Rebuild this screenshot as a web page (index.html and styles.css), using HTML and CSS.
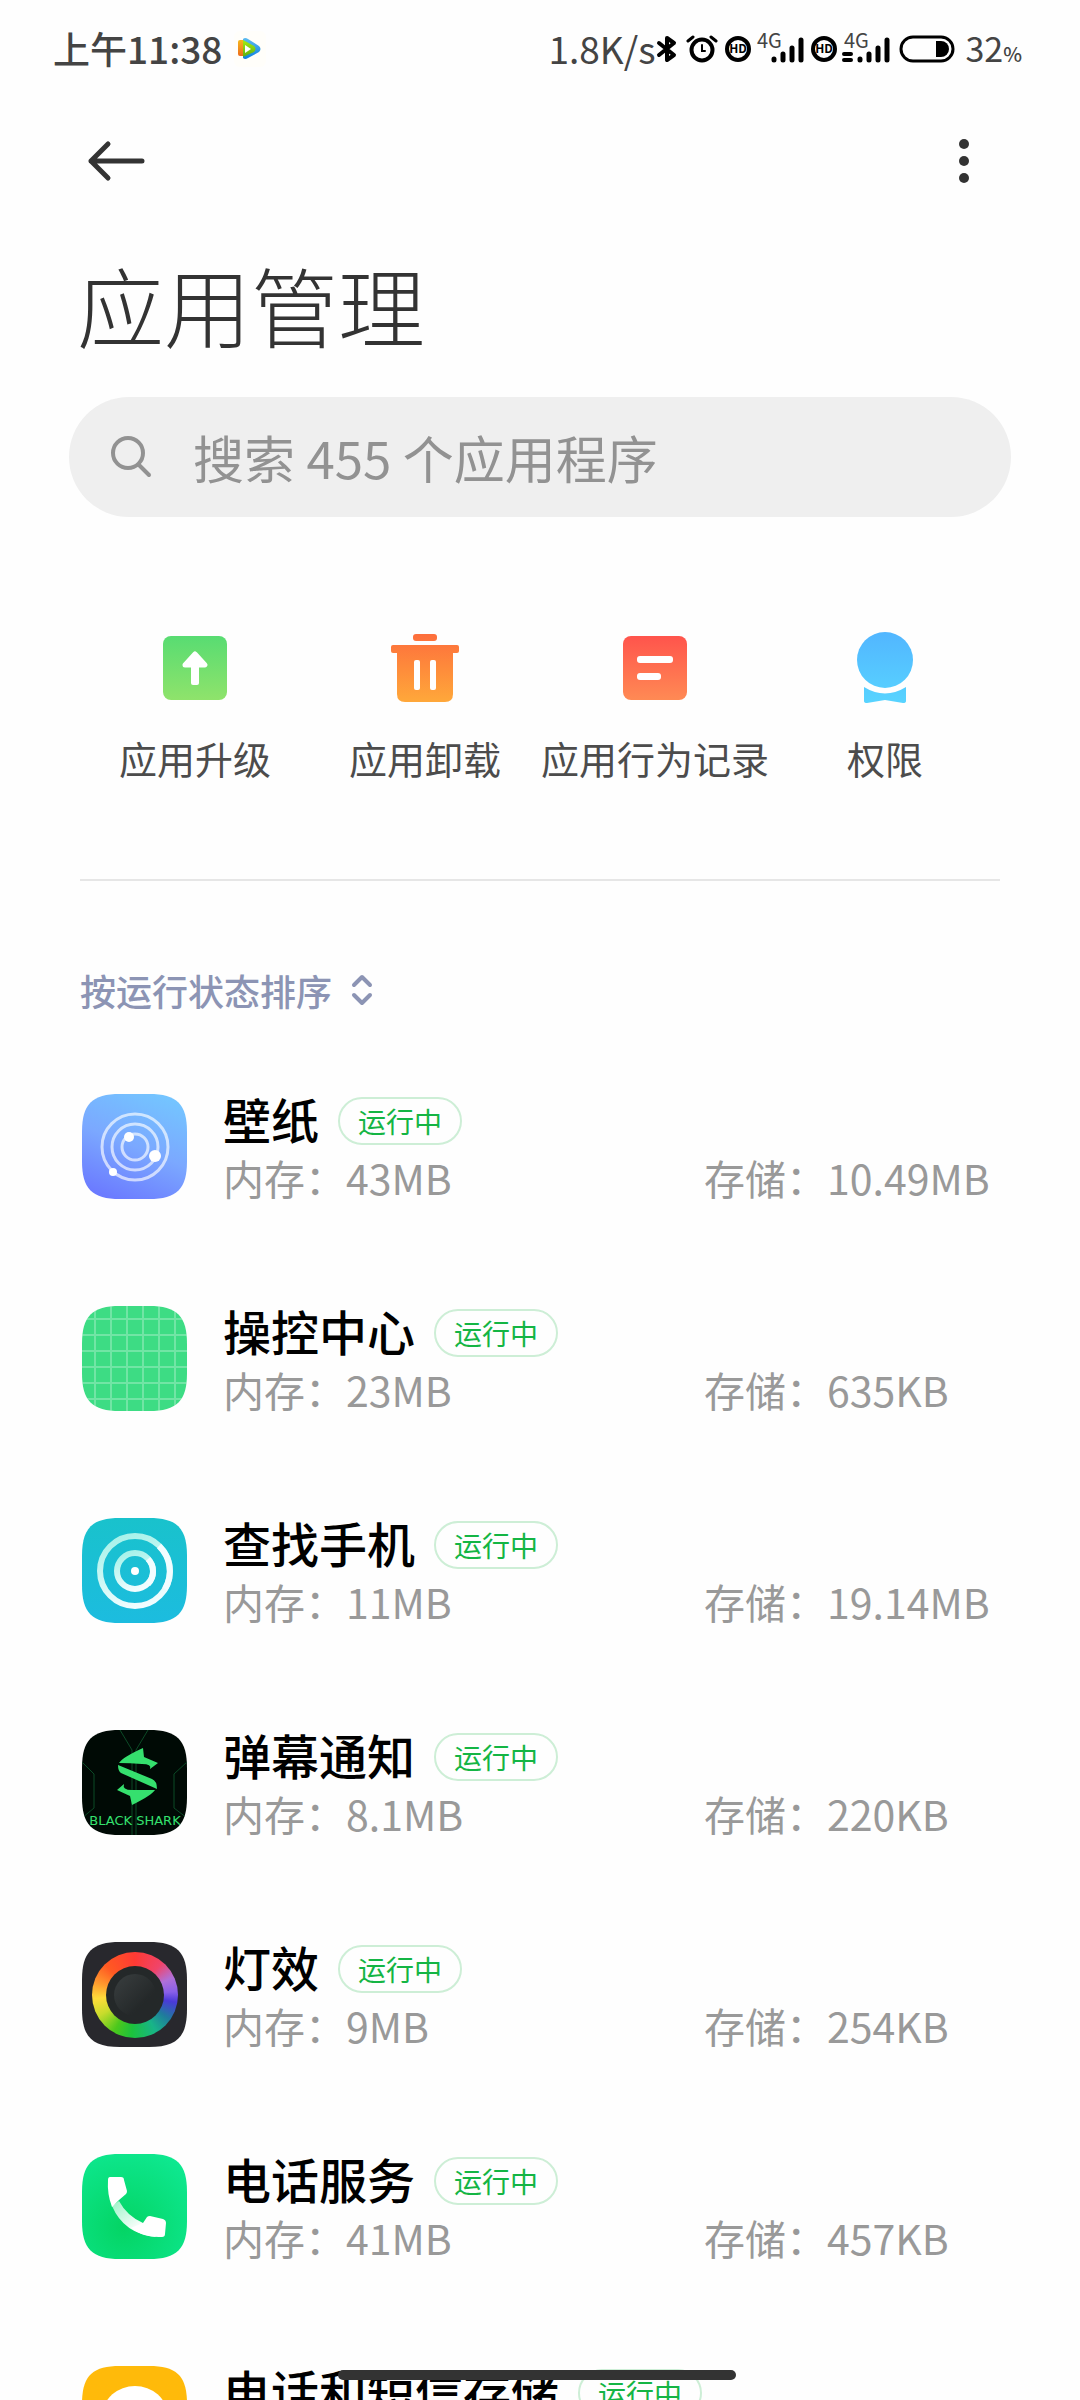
FILE: index.html
```
<!doctype html>
<html lang="zh-CN">
<head>
  <meta charset="UTF-8">
  <meta name="viewport" content="width=device-width, initial-scale=1">
  <title>应用管理</title>
  <link rel="stylesheet" href="styles.css">
</head>
<body>
  <!-- 所有应用图标共用的圆角外形 -->
  <svg class="defs" width="0" height="0" aria-hidden="true">
    <defs>
      <clipPath id="shape">
        <path d="M0 38C0 10 10 0 38 0H67C95 0 105 10 105 38V67C105 95 95 105 67 105H38C10 105 0 95 0 67Z"/>
      </clipPath>
    </defs>
  </svg>

  <div class="page">
    <div class="status">
      <div class="status-left">
        <span>上午11:38</span>
        <svg width="32" height="36" viewBox="0 0 32 36">
          <defs>
            <linearGradient id="pb" x1="0" y1="0" x2="0" y2="1"><stop offset="0" stop-color="#5cbcf0"/><stop offset="1" stop-color="#0c7fe0"/></linearGradient>
            <linearGradient id="po" x1="0" y1="0" x2="0" y2="1"><stop offset="0" stop-color="#f5b81c"/><stop offset="1" stop-color="#ee6b1c"/></linearGradient>
            <linearGradient id="pg" x1="0" y1="0" x2="0" y2="1"><stop offset="0" stop-color="#a6ee10"/><stop offset="1" stop-color="#5fae10"/></linearGradient>
          </defs>
          <rect width="32" height="36" rx="6" fill="#fffefa"/>
          <path d="M9 8Q11 6 14 8L25 15Q28 18 25 21L14 27Q11 29 9 27Z" fill="url(#pb)"/>
          <path d="M4 11Q4 9 6 9H9V25H6Q4 25 4 23Z" fill="url(#po)"/>
          <path d="M9 9L20 15Q23 18 20 21L9 26Z" fill="url(#pg)"/>
          <path d="M11 14L17 18L11 22Z" fill="#fff"/>
        </svg>
      </div>
      <div class="status-right">
        <span>1.8K/s</span>
        <svg width="24" height="28" viewBox="0 0 24 28" fill="none" stroke="#000" stroke-width="4" stroke-linejoin="round" stroke-linecap="round"><path d="M4 8L19 20L12 25V3L19 8L4 20"/></svg>
        <svg class="alarm" width="32" height="28" viewBox="0 0 32 28" fill="none" stroke="#000" stroke-linecap="round"><circle cx="16" cy="15" r="10.500" stroke-width="4"/><path d="M2 6L7 2M30 6L25 2" stroke-width="3"/><path d="M16 10V16H19" stroke-width="2"/></svg>
        <svg class="hd" width="26" height="28" viewBox="0 0 26 28"><circle cx="13" cy="14" r="11" fill="none" stroke="#000" stroke-width="4"/><text x="13" y="18" text-anchor="middle">HD</text></svg>
        <svg class="signal" width="52" height="40" viewBox="0 0 52 40"><text x="2" y="19">4G</text><path d="M19 30V31M28 25V31M37 19V31M46 11V31" stroke="#000" stroke-width="5" stroke-linecap="round"/></svg>
        <svg class="hd" width="26" height="28" viewBox="0 0 26 28"><circle cx="13" cy="14" r="11" fill="none" stroke="#000" stroke-width="4"/><text x="13" y="18" text-anchor="middle">HD</text></svg>
        <svg class="signal" width="52" height="40" viewBox="0 0 52 40"><text x="3" y="19">4G</text><path d="M19 30V31M28 25V31M37 19V31M46 11V31" stroke="#000" stroke-width="5" stroke-linecap="round"/><path d="M3 25H10M3 31H10" stroke="#000" stroke-width="4" stroke-linecap="round"/></svg>
        <svg class="battery" width="56" height="28" viewBox="0 0 56 28"><rect x="2" y="2" width="52" height="24" rx="12" fill="none" stroke="#000" stroke-width="3"/><path d="M37 6H42A8 8 0 0 1 42 22H37Z"/></svg>
        <span class="level">32<small>%</small></span>
      </div>
    </div>

    <header class="bar">
      <button class="icon-btn" aria-label="返回">
        <svg width="60" height="44" viewBox="0 0 60 44" fill="none" stroke="#333" stroke-width="5" stroke-linecap="round" stroke-linejoin="round"><path d="M22 5L5 22L22 39M5 22H56"/></svg>
      </button>
      <button class="icon-btn" aria-label="更多">
        <svg width="20" height="48" viewBox="0 0 20 48" fill="#333"><circle cx="10" cy="7" r="5"/><circle cx="10" cy="24" r="5"/><circle cx="10" cy="41" r="5"/></svg>
      </button>
    </header>

    <h1 class="title">应用管理</h1>

    <label class="search">
      <svg width="44" height="44" viewBox="0 0 44 44" fill="none" stroke="#929292" stroke-width="4" stroke-linecap="round"><circle cx="19" cy="18" r="15"/><path d="M30 30L40 40"/></svg>
      <input type="search" placeholder="搜索 455 个应用程序" aria-label="搜索应用程序">
    </label>

    <nav class="actions">
      <a href="#">
        <svg width="72" height="72" viewBox="0 0 72 72">
          <defs><linearGradient id="ga" x1="0" y1="0" x2="0" y2="1"><stop offset="0" stop-color="#58dc72"/><stop offset="1" stop-color="#8fe36b"/></linearGradient></defs>
          <rect x="4" y="4" width="64" height="64" rx="8" fill="url(#ga)"/>
          <path d="M36 22L46 33H26Z" fill="#fff" stroke="#fff" stroke-width="5" stroke-linejoin="round"/>
          <rect x="32" y="32" width="8" height="21" rx="2" fill="#fff"/>
        </svg>
        <span>应用升级</span>
      </a>
      <a href="#">
        <svg width="72" height="72" viewBox="0 0 72 72">
          <defs><linearGradient id="gb" gradientUnits="userSpaceOnUse" x1="0" y1="2" x2="0" y2="70"><stop offset="0" stop-color="#fd6e3c"/><stop offset="1" stop-color="#ffa83a"/></linearGradient></defs>
          <g fill="url(#gb)"><rect x="24" y="2" width="24" height="7" rx="3"/><rect x="2" y="13" width="68" height="8" rx="2"/><path d="M8 18H64V62Q64 70 56 70H16Q8 70 8 62Z"/></g>
          <g fill="#fff"><rect x="25" y="28" width="6" height="30" rx="2"/><rect x="41" y="28" width="6" height="30" rx="2"/></g>
        </svg>
        <span>应用卸载</span>
      </a>
      <a href="#">
        <svg width="72" height="72" viewBox="0 0 72 72">
          <defs><linearGradient id="gc" x1="0" y1="0" x2="0" y2="1"><stop offset="0" stop-color="#ff544c"/><stop offset="1" stop-color="#ff8a54"/></linearGradient></defs>
          <rect x="4" y="4" width="64" height="64" rx="8" fill="url(#gc)"/>
          <g fill="#fff"><rect x="18" y="24" width="36" height="7" rx="3"/><rect x="18" y="41" width="24" height="7" rx="3"/></g>
        </svg>
        <span>应用行为记录</span>
      </a>
      <a href="#">
        <svg width="72" height="72" viewBox="0 0 72 72">
          <defs><linearGradient id="gd" gradientUnits="userSpaceOnUse" x1="0" y1="0" x2="0" y2="72"><stop offset="0" stop-color="#52b6ff"/><stop offset="1" stop-color="#58d4ff"/></linearGradient></defs>
          <circle cx="36" cy="28" r="28" fill="url(#gd)"/>
          <path d="M15 55Q36 68 57 55V69Q57 71 54 71L36 68L18 71Q15 71 15 69Z" fill="url(#gd)"/>
        </svg>
        <span>权限</span>
      </a>
    </nav>

    <button class="sort">
      按运行状态排序
      <svg width="24" height="32" viewBox="0 0 24 32" fill="none" stroke="#8c94b4" stroke-width="4" stroke-linecap="round" stroke-linejoin="round"><path d="M4 11L12 3L20 11M4 21L12 29L20 21"/></svg>
    </button>

    <ul class="apps">
      <li class="app">
        <svg class="app-icon" viewBox="0 0 105 105">
          <defs><linearGradient id="g1" x1="0.700" y1="0" x2="0.300" y2="1"><stop offset="0" stop-color="#74c4ff"/><stop offset="0.500" stop-color="#7ba8ff"/><stop offset="1" stop-color="#6b7bff"/></linearGradient></defs>
          <g clip-path="url(#shape)"><rect width="105" height="105" fill="url(#g1)"/></g>
          <g fill="none" stroke="#fff" stroke-opacity=".65" stroke-width="3"><circle cx="53" cy="53" r="33"/><circle cx="53" cy="53" r="23"/><circle cx="53" cy="53" r="13"/></g>
          <g fill="#fff"><circle cx="47" cy="43" r="5"/><circle cx="73" cy="62" r="6"/><circle cx="31" cy="78" r="4"/></g>
        </svg>
        <div class="info">
          <div class="name">壁纸<span class="badge">运行中</span></div>
          <span>内存：43MB</span><span>存储：10.49MB</span>
        </div>
      </li>
      <li class="app">
        <svg class="app-icon" viewBox="0 0 105 105">
          <g clip-path="url(#shape)"><rect width="105" height="105" fill="#3ddc84"/>
          <path d="M13 0V105M29 0V105M45 0V105M61 0V105M77 0V105M93 0V105M0 13H105M0 29H105M0 45H105M0 61H105M0 77H105M0 93H105" stroke="#fff" stroke-opacity=".27" stroke-width="2"/></g>
        </svg>
        <div class="info">
          <div class="name">操控中心<span class="badge">运行中</span></div>
          <span>内存：23MB</span><span>存储：635KB</span>
        </div>
      </li>
      <li class="app">
        <svg class="app-icon" viewBox="0 0 105 105">
          <defs>
            <linearGradient id="g3" x1="0" y1="0" x2="0" y2="1"><stop offset="0" stop-color="#19c2cc"/><stop offset="1" stop-color="#1cbcdf"/></linearGradient>
            <linearGradient id="g3r" x1="0.300" y1="0" x2="0.600" y2="1"><stop offset="0" stop-color="#a8f2ea"/><stop offset="1" stop-color="#f2fdff"/></linearGradient>
          </defs>
          <g clip-path="url(#shape)"><rect width="105" height="105" fill="url(#g3)"/></g>
          <g fill="none" stroke="url(#g3r)" stroke-width="6"><circle cx="53" cy="53" r="35"/><circle cx="53" cy="53" r="18"/></g>
          <path d="M77 28A35 35 0 0 1 83 71M66 41A18 18 0 0 1 66 66" fill="none" stroke="#f2fdff" stroke-width="6"/>
          <circle cx="53" cy="53" r="4" fill="#fff"/>
        </svg>
        <div class="info">
          <div class="name">查找手机<span class="badge">运行中</span></div>
          <span>内存：11MB</span><span>存储：19.14MB</span>
        </div>
      </li>
      <li class="app">
        <svg class="app-icon" viewBox="0 0 105 105">
          <g clip-path="url(#shape)"><rect width="105" height="105" fill="#000a05"/>
          <path d="M38 0L50 20V105M66 0L54 20V105M0 32L12 44V78L0 88M105 32L92 44V78L105 88" fill="none" stroke="#0a4a26" stroke-width="1"/>
          <g fill="#35e06e">
            <path d="M61 18L62 27L76 33L68 39Q70 34 60 34Q48 33 37 33Q41 27 61 18Z"/>
            <path d="M36 35L70 49Q75 51 75 59L39 43Q36 41 36 35Z"/>
            <path d="M50 75L48 66L35 60L42 54Q40 60 50 60Q62 60 73 60Q70 65 50 75Z"/>
          </g>
          <text class="shark" x="53" y="95" text-anchor="middle">BLACK SHARK</text></g>
        </svg>
        <div class="info">
          <div class="name">弹幕通知<span class="badge">运行中</span></div>
          <span>内存：8.1MB</span><span>存储：220KB</span>
        </div>
      </li>
      <li class="app">
        <svg class="app-icon" viewBox="0 0 105 105">
          <defs><linearGradient id="g5" x1="0" y1="0" x2="0.700" y2="0.700"><stop offset="0" stop-color="#3a3f40"/><stop offset="1" stop-color="#242829"/></linearGradient></defs>
          <g clip-path="url(#shape)"><rect width="105" height="105" fill="#28282d"/></g>
          <foreignObject x="10" y="10" width="86" height="86"><div class="ring"></div></foreignObject>
          <circle cx="53" cy="53" r="29" fill="#242829"/>
          <circle cx="53" cy="53" r="21" fill="url(#g5)"/>
        </svg>
        <div class="info">
          <div class="name">灯效<span class="badge">运行中</span></div>
          <span>内存：9MB</span><span>存储：254KB</span>
        </div>
      </li>
      <li class="app">
        <svg class="app-icon" viewBox="0 0 105 105">
          <defs>
            <radialGradient id="g6" cx="0.400" cy="0.700" r="0.800"><stop offset="0" stop-color="#04d464"/><stop offset="1" stop-color="#0ee890"/></radialGradient>
            <linearGradient id="g6p" gradientUnits="userSpaceOnUse" x1="34" y1="48" x2="56" y2="76"><stop offset="0" stop-color="#a4f4cc"/><stop offset="1" stop-color="#fff"/></linearGradient>
          </defs>
          <g clip-path="url(#shape)"><rect width="105" height="105" fill="url(#g6)"/></g>
          <path d="M30 52L37 47Q45 62 61 69L74 83Q42 80 30 52Z" fill="url(#g6p)"/>
          <path d="M28 23H39Q42 23 42 26L45 37Q45 39 44 40L37 46L30 53Q25 40 26 26Q26 23 28 23Z" fill="#fff"/>
          <path d="M61 69L65 63Q66 62 68 62L81 65Q84 66 84 69L83 80Q83 83 80 83Q62 84 49 74Z" fill="#fff"/>
        </svg>
        <div class="info">
          <div class="name">电话服务<span class="badge">运行中</span></div>
          <span>内存：41MB</span><span>存储：457KB</span>
        </div>
      </li>
      <li class="app">
        <svg class="app-icon" viewBox="0 0 105 105">
          <g clip-path="url(#shape)"><rect width="105" height="105" fill="#ffba0a"/></g>
          <ellipse cx="53" cy="48" rx="32" ry="28" fill="#fff"/>
        </svg>
        <div class="info">
          <div class="name">电话和短信存储<span class="badge">运行中</span></div>
        </div>
      </li>
    </ul>
  </div>

  <div class="home-bar"></div>
</body>
</html>
```
FILE: styles.css
```
*{
  box-sizing: border-box;
}
body{
  margin: 0;
  background: #fefefe;
  color: #333;
  font-family: "Noto Sans CJK SC", sans-serif;
}
button{
  padding: 0;
  border: 0;
  background: none;
  font-family: inherit;
}
svg{
  display: block;
  flex: none;
}
.defs{
  position: absolute;
}
.page{
  height: 100vh;
  overflow: hidden;
}

/* 状态栏 */
.status{
  display: flex;
  justify-content: space-between;
  align-items: center;
  height: 97px;
  padding: 0 58px 0 53px;
  color: #444;
  font-size: 37px;
  line-height: 56px;
  font-weight: 500;
}
.status span{
  padding-bottom: 2px;
}
.status-left,
.status-right{
  display: flex;
  align-items: center;
}
.status-left{
  gap: 12px;
}
.status-right{
  font-weight: 400;
}
.status-right .alarm{
  margin: 0 7px;
}
.hd text{
  font-size: 12px;
  font-weight: 700;
}
.signal{
  margin: 0 4px;
}
.signal text{
  fill: #444;
  font-size: 20px;
}
.battery{
  margin: 0 10px 0 2px;
}
.level{
  font-size: 34px;
}
.level small{
  font-size: 20px;
  line-height: 20px;
  font-weight: 500;
}

/* 顶部导航 */
.bar{
  display: flex;
  justify-content: space-between;
  align-items: center;
  height: 127px;
  padding: 0 106px 0 86px;
}
.title{
  margin: 30px 77px 43px;
  font-size: 87px;
  line-height: 100px;
  font-weight: 300;
}
.search{
  display: flex;
  align-items: center;
  gap: 40px;
  height: 120px;
  margin: 0 69px;
  padding: 0 40px;
  border-radius: 60px;
  background: #efefef;
}
.search input{
  flex: 1;
  min-width: 0;
  padding: 0;
  border: 0;
  outline: 0;
  background: none;
  color: #333;
  font-family: inherit;
  font-size: 51px;
}
.search input::placeholder{
  color: #929292;
}

/* 快捷入口 */
.actions{
  display: grid;
  grid-template-columns: repeat(4, 1fr);
  margin: 115px 80px 0;
  padding-bottom: 97px;
  border-bottom: 2px solid #e6e6e6;
}
.actions a{
  display: flex;
  flex-direction: column;
  align-items: center;
  gap: 30px;
  color: #4c4c4c;
  font-size: 38px;
  line-height: 48px;
  white-space: nowrap;
  text-decoration: none;
}
.sort{
  display: flex;
  align-items: center;
  gap: 18px;
  margin: 84px 80px 30px;
  color: #8c94b4;
  font-size: 36px;
  line-height: 50px;
  font-weight: 500;
}

/* 应用列表 */
.apps{
  margin: 0;
  padding: 0 80px;
  list-style: none;
}
.app{
  display: flex;
  gap: 36px;
  padding: 49px 0 52px;
}
.app-icon{
  width: 105px;
  height: 105px;
  margin-left: 2px;
}
.info{
  flex: 1;
  display: grid;
  grid-template-columns: 1fr 296px;
  align-content: start;
  row-gap: 5px;
  color: #999;
  font-size: 41px;
  line-height: 55px;
  white-space: nowrap;
}
.name{
  grid-column: 1 / -1;
  display: flex;
  align-items: flex-start;
  gap: 19px;
  color: #000;
  font-size: 48px;
  line-height: 48px;
  font-weight: 500;
}
.badge{
  margin-top: 3px;
  padding: 0 18px;
  border: 2px solid #cdeed6;
  border-radius: 24px;
  color: #14b544;
  font-size: 28px;
  line-height: 44px;
  font-weight: 400;
}
.shark{
  fill: #35e06e;
  font-family: "DejaVu Sans", sans-serif;
  font-size: 13px;
}
.ring{
  width: 86px;
  height: 86px;
  border-radius: 50%;
  background: conic-gradient(#ff3a34, #f0446a 40deg, #b070d8 65deg, #8a60e8 85deg, #4a3ad8 100deg, #1f7c9c 125deg, #18b488 150deg, #1cc23c 185deg, #4cc81c 210deg, #c8dc2c 240deg, #ffdc3a 265deg, #ff9a2e 288deg, #ff5a22 315deg, #ff3a34);
}
.home-bar{
  position: fixed;
  bottom: 20px;
  left: 50%;
  width: 398px;
  height: 10px;
  margin-left: -202px;
  border-radius: 5px;
  background: #333;
}
```
